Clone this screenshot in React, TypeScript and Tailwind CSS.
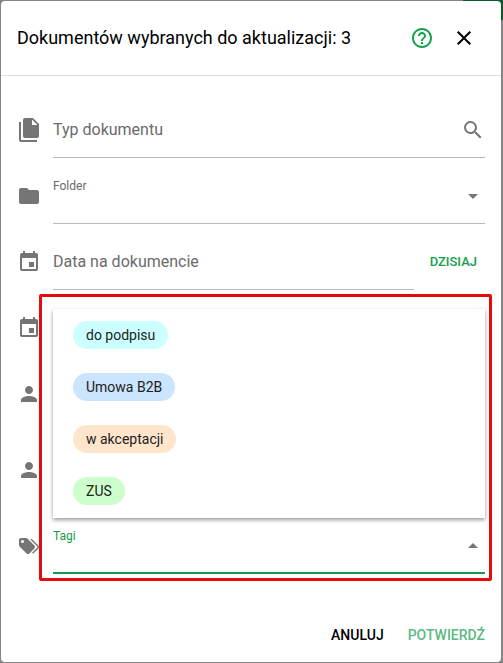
import { useState } from 'react';
import type { ReactNode } from 'react';
import { MdArrowDropDown, MdArrowDropUp, MdClose, MdFolder, MdHelpOutline, MdPerson } from 'react-icons/md';

const paths = {
  files:
    'M15,7H20.5L15,1.5V7M8,0H16L22,6V18A2,2 0 0,1 20,20H8C6.89,20 6,19.1 6,18V2A2,2 0 0,1 8,0M4,4V22H20V24H4A2,2 0 0,1 2,22V4H4Z',
  calendar:
    'M19,19H5V8H19M16,1V3H8V1H6V3H5C3.89,3 3,3.89 3,5V19A2,2 0 0,0 5,21H19A2,2 0 0,0 21,19V5C21,3.89 20.1,3 19,3H18V1M17,12H12V17H17V12Z',
  tags:
    'M5.5,9A1.5,1.5 0 0,0 7,7.5A1.5,1.5 0 0,0 5.5,6A1.5,1.5 0 0,0 4,7.5A1.5,1.5 0 0,0 5.5,9M17.41,11.58C17.77,11.94 18,12.44 18,13C18,13.55 17.78,14.05 17.41,14.41L12.41,19.41C12.05,19.77 11.55,20 11,20C10.45,20 9.95,19.78 9.58,19.41L2.59,12.42C2.22,12.05 2,11.55 2,11V6C2,4.89 2.89,4 4,4H9C9.55,4 10.05,4.22 10.41,4.58L17.41,11.58M13.54,5.71L14.54,4.71L21.41,11.58C21.78,11.94 22,12.45 22,13C22,13.55 21.78,14.05 21.42,14.41L16.04,19.79L15.04,18.79L20.75,13L13.54,5.71Z',
  magnify:
    'M9.5,3A6.5,6.5 0 0,1 16,9.5C16,11.11 15.41,12.59 14.44,13.73L14.71,14H15.5L20.5,19L19,20.5L14,15.5V14.71L13.73,14.44C12.59,15.41 11.11,16 9.5,16A6.5,6.5 0 0,1 3,9.5A6.5,6.5 0 0,1 9.5,3M9.5,5C7,5 5,7 5,9.5C5,12 7,14 9.5,14C12,14 14,12 14,9.5C14,7 12,5 9.5,5Z',
};

const tags = [
  { label: 'do podpisu', color: 'bg-[#ccffff]' },
  { label: 'Umowa B2B', color: 'bg-[#cce5ff]' },
  { label: 'w akceptacji', color: 'bg-[#ffe5cc]' },
  { label: 'ZUS', color: 'bg-[#ccffcc]' },
];

function Icon({ name }: { name: keyof typeof paths }) {
  return (
    <svg viewBox="0 0 24 24" fill="currentColor" className="size-6" aria-hidden="true">
      <path d={paths[name]} />
    </svg>
  );
}

function Row({ icon, children }: { icon: ReactNode; children: ReactNode }) {
  return (
    <div className="flex h-14 items-stretch gap-3">
      <span className="flex w-6 shrink-0 items-center text-[#757575]">{icon}</span>
      {children}
    </div>
  );
}

const inputClass =
  'h-full w-full bg-transparent text-base text-black outline-none placeholder:text-[#6b6b6b]';

export default function App() {
  const [open, setOpen] = useState(true);

  return (
    <div className="relative flex min-h-screen flex-col bg-[#858585] pt-px pr-0.5 pb-px pl-px font-['Roboto',sans-serif]">
      {/* App bar behind the dialog */}
      <div className="absolute top-0 right-0 h-5 w-10 bg-[#0b5a2c]" />

      <div
        role="dialog"
        aria-labelledby="dialog-title"
        className="relative flex flex-1 flex-col rounded bg-white"
      >
        <header className="flex h-[75px] items-center border-b border-[#e0e0e0] px-4 pb-px">
          <h1 id="dialog-title" className="flex-1 text-lg text-black">
            Dokumentów wybranych do aktualizacji: 3
          </h1>
          <div className="flex gap-[18px] pr-[9px]">
            <button type="button" aria-label="Pomoc" className="text-[#12a04b]">
              <MdHelpOutline className="size-6" />
            </button>
            <button type="button" aria-label="Zamknij" className="text-black">
              <MdClose className="size-6" />
            </button>
          </div>
        </header>

        <form id="update-form" className="flex flex-col gap-5 px-4 pt-[26px]">
          <div className="flex flex-col gap-2.5">
            <Row icon={<Icon name="files" />}>
              <div className="flex flex-1 items-center border-b border-[#b8b8b8]">
                <input aria-label="Typ dokumentu" placeholder="Typ dokumentu" className={inputClass} />
                <button type="button" aria-label="Szukaj" className="text-[#757575]">
                  <Icon name="magnify" />
                </button>
              </div>
            </Row>

            <Row icon={<MdFolder className="size-6" />}>
              <div className="relative flex flex-1 flex-col border-b border-[#b8b8b8]">
                <label htmlFor="folder" className="pt-2.5 text-xs leading-4 text-[#6b6b6b]">
                  Folder
                </label>
                <select id="folder" className="w-full flex-1 appearance-none bg-transparent outline-none">
                  <option value="" />
                </select>
                <MdArrowDropDown className="pointer-events-none absolute top-4 right-0 size-6 text-[#757575]" />
              </div>
            </Row>

            <Row icon={<Icon name="calendar" />}>
              <div className="flex-1 border-b border-[#b8b8b8]">
                <input aria-label="Data na dokumencie" placeholder="Data na dokumencie" className={inputClass} />
              </div>
              <button type="button" className="pr-2 pl-1 text-[13px] font-medium text-[#12a04b]">
                DZISIAJ
              </button>
            </Row>

            <Row icon={<Icon name="calendar" />}>
              <div className="flex-1 border-b border-[#b8b8b8]">
                <input aria-label="Termin" className={inputClass} />
              </div>
            </Row>

            <Row icon={<MdPerson className="size-6" />}>
              <div className="flex-1 border-b border-[#b8b8b8]">
                <input aria-label="Kontrahent" className={inputClass} />
              </div>
            </Row>
          </div>

          <Row icon={<MdPerson className="size-6" />}>
            <div className="flex-1 border-b border-[#b8b8b8]">
              <input aria-label="Osoba" className={inputClass} />
            </div>
          </Row>

          <Row icon={<Icon name="tags" />}>
            <div className="relative flex flex-1 flex-col border-b-2 border-[#159a4c]">
              <label htmlFor="tags" className="pt-2.5 text-xs leading-4 text-[#159a4c]">
                Tagi
              </label>
              <button
                id="tags"
                type="button"
                role="combobox"
                aria-expanded={open}
                aria-controls="tag-list"
                onClick={() => setOpen(!open)}
                className="w-full flex-1 outline-none"
              />
              <MdArrowDropUp className="pointer-events-none absolute top-4 right-0 size-6 text-[#757575]" />

              {open && (
                <ul
                  id="tag-list"
                  role="listbox"
                  aria-label="Tagi"
                  className="absolute bottom-full left-0 w-full bg-white pb-px shadow-[0_2px_4px_rgba(0,0,0,0.4)]"
                >
                  {tags.map((tag) => (
                    <li key={tag.label} role="option" aria-selected="false" className="flex h-[52px] items-center px-5">
                      <span className={`rounded-full px-[13px] py-1 text-sm leading-5 text-[#212121] ${tag.color}`}>
                        {tag.label}
                      </span>
                    </li>
                  ))}
                </ul>
              )}

              {/* Highlight around the tag picker */}
              <div className="pointer-events-none absolute -top-56 -right-[7px] -bottom-[9px] -left-3.5 rounded-xs border-3 border-[#e60a0a]" />
            </div>
          </Row>
        </form>

        <footer className="mt-auto flex justify-end gap-6 px-4 pt-9 pb-[17px]">
          <button type="button" className="text-sm font-medium text-black">
            ANULUJ
          </button>
          <button type="submit" form="update-form" className="text-sm font-medium text-[#5cb984]">
            POTWIERDŹ
          </button>
        </footer>
      </div>
    </div>
  );
}
